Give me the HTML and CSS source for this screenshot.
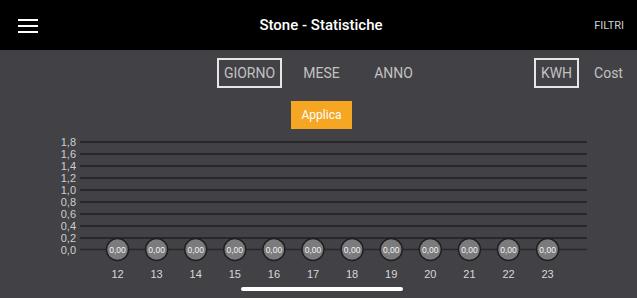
FILE: index.html
```html
<!DOCTYPE html>
<html lang="it">
<head>
    <meta charset="UTF-8">
    <meta name="viewport" content="width=device-width, initial-scale=1.0">
    <title>Stone - Statistiche</title>
    <link rel="stylesheet" href="styles.css">
</head>
<body>

    <header class="topbar">
        <button class="menu" aria-label="Menu">
            <svg width="20" height="14" viewBox="0 0 20 14">
                <rect x="0" y="0" width="20" height="2" fill="#fff"/>
                <rect x="0" y="6" width="20" height="2" fill="#fff"/>
                <rect x="0" y="12" width="20" height="2" fill="#fff"/>
            </svg>
        </button>
        <h1 class="title">Stone - Statistiche</h1>
        <a class="filters" href="#">FILTRI</a>
    </header>

    <div class="toolbar">
        <div class="tabs">
            <span class="tab active">GIORNO</span>
            <span class="tab">MESE</span>
            <span class="tab">ANNO</span>
        </div>
        <div class="units">
            <span class="unit active">KWH</span>
            <span class="unit">Cost</span>
        </div>
    </div>

    <div class="apply-row">
        <button class="apply">Applica</button>
    </div>

    <!-- viewBox uses page coordinates: chart starts at y=129 -->
    <svg class="chart" width="637" height="150" viewBox="0 129 637 150">
        <g class="grid">
            <line x1="80" x2="587" y1="142" y2="142"/>
            <line x1="80" x2="587" y1="154" y2="154"/>
            <line x1="80" x2="587" y1="166" y2="166"/>
            <line x1="80" x2="587" y1="178" y2="178"/>
            <line x1="80" x2="587" y1="190" y2="190"/>
            <line x1="80" x2="587" y1="202" y2="202"/>
            <line x1="80" x2="587" y1="214" y2="214"/>
            <line x1="80" x2="587" y1="226" y2="226"/>
            <line x1="80" x2="587" y1="238" y2="238"/>
            <line class="base" x1="80" x2="587" y1="249.5" y2="249.5"/>
        </g>
        <g class="ylabels">
            <text x="76" y="146">1,8</text>
            <text x="76" y="158">1,6</text>
            <text x="76" y="170">1,4</text>
            <text x="76" y="182">1,2</text>
            <text x="76" y="194">1,0</text>
            <text x="76" y="206">0,8</text>
            <text x="76" y="218">0,6</text>
            <text x="76" y="230">0,4</text>
            <text x="76" y="242">0,2</text>
            <text x="76" y="253.5">0,0</text>
        </g>
        <g class="points" id="points"></g>
        <g class="xlabels" id="xlabels"></g>
    </svg>

    <div class="home-bar"></div>

    <script>
        const points = document.getElementById('points');
        const xlabels = document.getElementById('xlabels');
        const ns = 'http://www.w3.org/2000/svg';
        for (let i = 0; i < 12; i++) {
            const cx = 117.5 + i * 39.1;
            const c = document.createElementNS(ns, 'circle');
            c.setAttribute('cx', cx);
            c.setAttribute('cy', 249.5);
            c.setAttribute('r', 11);
            points.appendChild(c);

            const v = document.createElementNS(ns, 'text');
            v.setAttribute('x', cx);
            v.setAttribute('y', 252.5);
            v.textContent = '0,00';
            points.appendChild(v);

            const h = document.createElementNS(ns, 'text');
            h.setAttribute('x', cx);
            h.setAttribute('y', 277.5);
            h.textContent = 12 + i;
            xlabels.appendChild(h);
        }
    </script>

</body>
</html>
```

FILE: styles.css
```css
body {
    margin: 0;
    background-color: #414146;
    font-family: Roboto, "Liberation Sans", sans-serif;
    color: #d6d6d6;
    height: 298px;
    overflow: hidden;
    position: relative;
}

.topbar {
    height: 50px;
    background-color: #000;
    display: grid;
    grid-template-columns: 1fr auto 1fr;
    align-items: center;
    padding: 0 13px 0 18px;
}
.menu {
    background: none;
    border: none;
    padding: 0;
    width: 20px;
    height: 14px;
    display: flex;
    margin-top: 1px;
}
.title {
    margin: 0;
    font-size: 15px;
    font-weight: 500;
    color: #fff;
}
.filters {
    justify-self: end;
    font-size: 11px;
    color: #d0d0d0;
    text-decoration: none;
}

.toolbar {
    margin-top: 8px;
    display: grid;
    grid-template-columns: 1fr auto 1fr;
    align-items: center;
    padding: 0 6px 0 12px;
}
.tabs {
    grid-column: 2;
    display: flex;
    gap: 7px;
}
.tab {
    width: 65px;
    height: 30px;
    box-sizing: border-box;
    display: flex;
    align-items: center;
    justify-content: center;
    font-size: 14px;
    color: #c2c2c2;
    border: 2px solid transparent;
}
.units {
    justify-self: end;
    display: flex;
    gap: 7px;
}
.unit {
    width: 45px;
    height: 30px;
    box-sizing: border-box;
    display: flex;
    align-items: center;
    justify-content: center;
    font-size: 14px;
    color: #c2c2c2;
    border: 2px solid transparent;
}
.active {
    border-color: #e6e6e6;
}

.apply-row {
    display: flex;
    justify-content: center;
    padding-left: 6px;
    margin-top: 13px;
}
.apply {
    width: 61px;
    height: 28px;
    background-color: #f5a623;
    border: none;
    color: #fff;
    font-family: Roboto, "Liberation Sans", sans-serif;
    font-size: 12px;
    padding: 0;
}

.chart {
    display: block;
}
.grid line {
    stroke: #28282c;
    stroke-width: 2;
}
.grid .base {
    stroke-width: 1.5;
}
.ylabels text {
    font-family: "Liberation Sans", sans-serif;
    font-size: 11px;
    fill: #cfcfcf;
    text-anchor: end;
}
.points circle {
    fill: #7b7b7d;
    stroke: #1f1f22;
    stroke-width: 1.5;
}
.points text {
    font-family: "Liberation Sans", sans-serif;
    font-size: 8.5px;
    fill: #f2f2f2;
    text-anchor: middle;
}
.xlabels text {
    font-family: "Liberation Sans", sans-serif;
    font-size: 11px;
    fill: #d8d8d8;
    text-anchor: middle;
}

.home-bar {
    position: absolute;
    left: 241px;
    bottom: 7px;
    width: 162px;
    height: 4px;
    border-radius: 2px;
    background-color: #fff;
}
```
